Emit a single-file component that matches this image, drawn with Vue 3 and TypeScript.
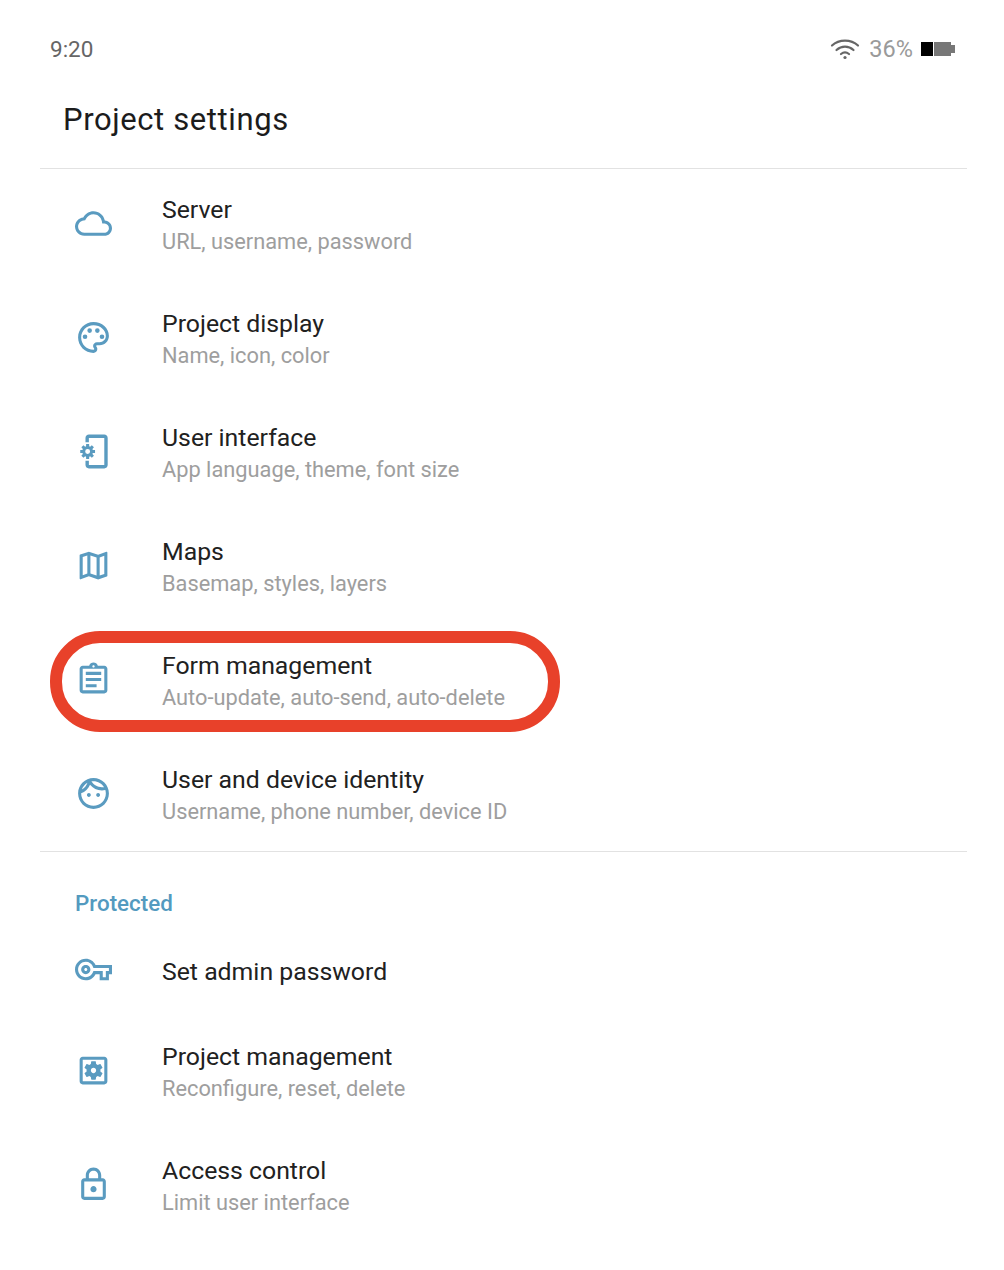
<script setup lang="ts">
interface Setting {
  title: string;
  sub?: string;
  icon: string;
  circled?: boolean;
}

// small cog that sits in the gap of the phone outline
function cog(cx: number, cy: number, outer: number, inner: number, hole: number): string {
  const points: string[] = [];
  for (let i = 0; i < 8; i++) {
    const mid = (i * Math.PI) / 4;
    const corners: [number, number][] = [
      [inner, mid - 0.3],
      [outer, mid - 0.2],
      [outer, mid + 0.2],
      [inner, mid + 0.3],
    ];
    for (const [r, a] of corners) {
      points.push(`${(cx + r * Math.cos(a)).toFixed(2)} ${(cy + r * Math.sin(a)).toFixed(2)}`);
    }
  }
  const ring = `M${cx - hole} ${cy}a${hole} ${hole} 0 1 0 ${hole * 2} 0a${hole} ${hole} 0 1 0 ${-hole * 2} 0z`;
  return `M${points.join('L')}z${ring}`;
}

const cloud = 'M19.35 10.04C18.67 6.59 15.64 4 12 4 9.11 4 6.6 5.64 5.35 8.04 2.34 8.36 0 10.91 0 14c0 3.31 2.69 6 6 6h13c2.76 0 5-2.24 5-5 0-2.64-2.05-4.78-4.65-4.96zM19 18H6c-2.21 0-4-1.79-4-4 0-2.05 1.53-3.76 3.56-3.97l1.07-.11.5-.95C8.08 7.14 9.94 6 12 6c2.62 0 4.88 1.86 5.39 4.43l.3 1.5 1.53.11c1.56.1 2.78 1.41 2.78 2.96 0 1.65-1.35 3-3 3z';
const palette = 'M12 22C6.49 22 2 17.51 2 12S6.49 2 12 2s10 4.04 10 9c0 3.31-2.69 6-6 6h-1.77c-.28 0-.5.22-.5.5 0 .12.05.23.13.33.41.47.64 1.06.64 1.67 0 1.38-1.12 2.5-2.5 2.5zm0-18c-4.41 0-8 3.59-8 8s3.59 8 8 8c.28 0 .5-.22.5-.5 0-.16-.08-.28-.14-.35-.41-.46-.63-1.05-.63-1.65 0-1.38 1.12-2.5 2.5-2.5H16c2.21 0 4-1.79 4-4 0-3.86-3.59-7-8-7zM6.5 10a1.5 1.5 0 1 0 0 3 1.5 1.5 0 0 0 0-3zM9.5 6a1.5 1.5 0 1 0 0 3 1.5 1.5 0 0 0 0-3zM14.5 6a1.5 1.5 0 1 0 0 3 1.5 1.5 0 0 0 0-3zM17.5 10a1.5 1.5 0 1 0 0 3 1.5 1.5 0 0 0 0-3z';
const phoneGear = 'M9 1h10c1.2 0 2.200 1 2.200 2.200v17.600c0 1.200-1 2.200-2.200 2.200H9c-1.200 0-2.200-1-2.200-2.200V18H9v2.800h10V3.200H9V6H6.800V3.200C6.800 2 7.800 1 9 1z' + cog(8.2, 12, 4.9, 3.5, 1.6);
const map = 'M20.5 3l-.16.03L15 5.1 9 3 3.36 4.9c-.21.07-.36.25-.36.48V20.5c0 .28.22.5.5.5l.16-.03L9 18.9l6 2.1 5.64-1.9c.21-.07.36-.25.36-.48V3.5c0-.28-.22-.5-.5-.5zM10 5.47l4 1.4v11.66l-4-1.4V5.47zm-5 .99l3-1.01v11.7l-3 1.16V6.46zm14 11.08l-3 1.01V6.86l3-1.16v11.84z';
const clipboard = 'M19 3h-4.18C14.4 1.84 13.3 1 12 1c-1.3 0-2.4.84-2.82 2H5c-1.100 0-2 .9-2 2v14c0 1.100.9 2 2 2h14c1.100 0 2-.9 2-2V5c0-1.100-.9-2-2-2zm-7-.25c.41 0 .75.34.75.75s-.34.75-.75.75-.75-.34-.75-.75.34-.75.75-.75zM19 19H5V5h14v14zM7 15h7v2H7zm0-4h10v2H7zm0-4h10v2H7z';
const face = 'M10.25 13c0 .69-.56 1.25-1.25 1.25S7.75 13.69 7.75 13s.56-1.25 1.25-1.25 1.25.56 1.25 1.25zM15 11.75c-.69 0-1.25.56-1.25 1.25s.56 1.25 1.25 1.25 1.25-.56 1.25-1.25-.56-1.25-1.25-1.25zm7 .25c0 5.52-4.48 10-10 10S2 17.52 2 12 6.48 2 12 2s10 4.48 10 10zM10.66 4.12C12.06 6.44 14.6 8 17.5 8c.46 0 .91-.05 1.34-.12C17.44 5.56 14.9 4 12 4c-.46 0-.91.05-1.34.12zM4.42 9.47c1.71-.97 3.03-2.55 3.66-4.44C6.37 6 5.05 7.58 4.42 9.47zM20 12c0-.78-.12-1.53-.33-2.24-.7.15-1.42.24-2.17.24-3.13 0-5.92-1.44-7.76-3.69C8.69 8.87 6.6 10.88 4 11.86c.01.04 0 .09 0 .14 0 4.41 3.59 8 8 8s8-3.59 8-8z';
const key = 'M22 19h-6v-4h-2.68c-1.14 2.42-3.6 4-6.32 4-3.86 0-7-3.14-7-7s3.14-7 7-7c2.72 0 5.17 1.58 6.32 4H24v6h-2v4zm-4-2h2v-4h2v-2H11.94l-.23-.67C11.01 8.34 9.11 7 7 7c-2.76 0-5 2.24-5 5s2.24 5 5 5c2.11 0 4.01-1.34 4.71-3.33l.23-.67H18v4zM7 15c-1.65 0-3-1.35-3-3s1.35-3 3-3 3 1.35 3 3-1.35 3-3 3zm0-4c-.55 0-1 .45-1 1s.45 1 1 1 1-.45 1-1-.45-1-1-1z';
const gearBox = 'M6.21 13.97l1.2 2.07c.08.13.23.18.37.13l1.49-.6c.31.24.64.44 1.01.59l.22 1.59c.03.14.15.25.3.25h2.4c.15 0 .27-.11.3-.25l.22-1.59c.36-.15.7-.35 1.01-.59l1.49.6c.14.05.29 0 .37-.13l1.2-2.07c.08-.13.04-.29-.07-.39l-1.27-.99c.03-.19.05-.39.05-.59 0-.2-.02-.4-.05-.59l1.27-.99c.11-.09.15-.26.07-.39l-1.2-2.07c-.08-.13-.23-.18-.37-.13l-1.49.6c-.31-.24-.64-.44-1.01-.59l-.22-1.59c-.03-.14-.15-.25-.3-.25h-2.4c-.15 0-.27.11-.3.25l-.22 1.59c-.36.15-.71.34-1.01.58l-1.49-.6c-.14-.05-.29 0-.37.13l-1.2 2.07c-.08.13-.04.29.07.39l1.27.99c-.03.2-.05.4-.05.6 0 .2.02.4.05.59l-1.27.99c-.11.1-.15.26-.07.39zM12 10.29c.94 0 1.71.77 1.71 1.71s-.77 1.71-1.71 1.71-1.71-.77-1.71-1.71.77-1.71 1.71-1.71zM19 3H5c-1.110 0-2 .9-2 2v14c0 1.100.89 2 2 2h14c1.110 0 2-.9 2-2V5c0-1.100-.89-2-2-2zm0 16H5V5h14v14z';
const lock = 'M18 8h-1V6c0-2.76-2.24-5-5-5S7 3.24 7 6v2H6c-1.100 0-2 .9-2 2v10c0 1.100.9 2 2 2h12c1.100 0 2-.9 2-2V10c0-1.100-.9-2-2-2zM9 6c0-1.660 1.340-3 3-3s3 1.340 3 3v2H9V6zm9 14H6V10h12v10zm-6-3c1.100 0 2-.9 2-2s-.9-2-2-2-2 .9-2 2 .9 2 2 2z';

const general: Setting[] = [
  { title: 'Server', sub: 'URL, username, password', icon: cloud },
  { title: 'Project display', sub: 'Name, icon, color', icon: palette },
  { title: 'User interface', sub: 'App language, theme, font size', icon: phoneGear },
  { title: 'Maps', sub: 'Basemap, styles, layers', icon: map },
  { title: 'Form management', sub: 'Auto-update, auto-send, auto-delete', icon: clipboard, circled: true },
  { title: 'User and device identity', sub: 'Username, phone number, device ID', icon: face },
];

const guarded: Setting[] = [
  { title: 'Set admin password', icon: key },
  { title: 'Project management', sub: 'Reconfigure, reset, delete', icon: gearBox },
  { title: 'Access control', sub: 'Limit user interface', icon: lock },
];
</script>

<template>
  <div class="page">
    <div class="status">
      <span class="time">9:20</span>
      <div class="status__right">
        <svg class="wifi" width="30" height="22" viewBox="0 0 30 22" fill="none" stroke="#666" stroke-width="2.2" stroke-linecap="round">
          <path d="M2 7.500C9 1 21 1 28 7.500" />
          <path d="M6.500 12C11.500 7.500 18.500 7.500 23.500 12" />
          <path d="M11 16C13.500 14 16.500 14 19 16" />
          <circle cx="15" cy="19.500" r="1.600" fill="#666" stroke="none" />
        </svg>
        <span class="percent">36%</span>
        <svg width="35" height="14" viewBox="0 0 35 14">
          <rect width="12" height="14" fill="#000" />
          <rect x="13" width="17" height="14" fill="#777" />
          <rect x="30" y="3" width="4" height="8" fill="#777" />
        </svg>
      </div>
    </div>

    <h1 class="heading">Project settings</h1>

    <section class="group group--general">
      <div v-for="item in general" :key="item.title" class="row">
        <svg class="row__icon" viewBox="0 0 24 24"><path :d="item.icon" /></svg>
        <div class="row__text">
          <div class="row__title">{{ item.title }}</div>
          <div class="row__sub">{{ item.sub }}</div>
        </div>
        <div v-if="item.circled" class="ring"></div>
      </div>
    </section>

    <section class="group">
      <div class="label">Protected</div>
      <div
        v-for="item in guarded"
        :key="item.title"
        class="row"
        :class="{ 'row--single': !item.sub }"
      >
        <svg class="row__icon" viewBox="0 0 24 24"><path :d="item.icon" /></svg>
        <div class="row__text">
          <div class="row__title">{{ item.title }}</div>
          <div v-if="item.sub" class="row__sub">{{ item.sub }}</div>
        </div>
      </div>
    </section>
  </div>
</template>

<style scoped>
.page {
  box-sizing: border-box;
  width: 1004px;
  height: 1270px;
  padding: 0 37px 0 40px;
  background: #fff;
  font-family: Roboto, "Liberation Sans", sans-serif;
  overflow: hidden;
}

.status {
  display: flex;
  align-items: center;
  justify-content: space-between;
  height: 100px;
  padding: 0 11px 2px 10px;
  box-sizing: border-box;
}

.time {
  font-size: 22.5px;
  color: #666;
}

.status__right {
  display: flex;
  align-items: center;
  gap: 8px;
}

.wifi {
  margin-right: 1px;
}

.percent {
  font-size: 23.5px;
  color: #9a9a9a;
}

.heading {
  margin: 0;
  height: 68px;
  padding-left: 23px;
  font-size: 31px;
  font-weight: 400;
  line-height: 40px;
  color: #1c1c1c;
  letter-spacing: 0.6px;
}

.group {
  border-top: 1px solid #e2e2e2;
}

.group--general {
  height: 682px;
}

.label {
  height: 77px;
  padding: 37px 0 0 35px;
  box-sizing: border-box;
  font-size: 22.4px;
  font-weight: 500;
  line-height: 28px;
  color: #539abf;
}

.row {
  position: relative;
  display: flex;
  align-items: center;
  height: 114px;
}

.row--single {
  height: 87px;
}

.row__icon {
  flex: none;
  width: 37px;
  height: 37px;
  margin: 0 50px 6px 35px;
  fill: #5a9bc0;
}

.row__text {
  margin-bottom: 1px;
}

.row__title {
  font-size: 24.8px;
  line-height: 32px;
  color: #212121;
}

.row__sub {
  margin-top: 1px;
  font-size: 21.8px;
  line-height: 30px;
  color: #9e9e9e;
}

.ring {
  position: absolute;
  left: 10px;
  top: 6px;
  width: 510px;
  height: 101px;
  box-sizing: border-box;
  border: 12px solid #e8412a;
  border-radius: 50px;
}
</style>
